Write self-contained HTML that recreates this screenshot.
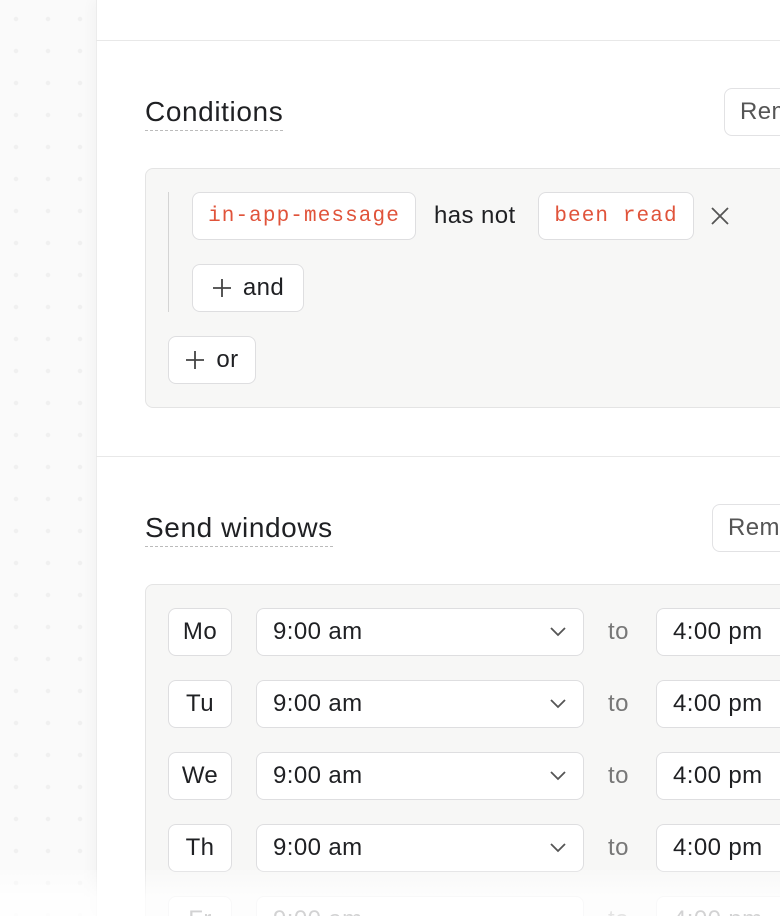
<!DOCTYPE html>
<html><head><meta charset="utf-8"><style>
*{box-sizing:border-box;margin:0;padding:0}
html,body{width:780px;height:916px;overflow:hidden}
body{background:#fff;font-family:"Liberation Sans",sans-serif;color:#1f2023;position:relative}
.side{position:absolute;left:0;top:0;width:96px;height:916px;background-color:#fafafa;background-image:radial-gradient(circle,#f0f0f0 2px,transparent 2.5px);background-size:32px 32px;background-position:0 3px}
.main{position:absolute;left:96px;top:0;width:684px;height:916px;background:#fff;border-left:1px solid #ececec;box-shadow:-4px 0 12px rgba(0,0,0,.03)}
.hl{position:absolute;left:96px;right:0;height:1px;background:#e8e8e8}
.h{position:absolute;left:145px;font-size:28px;letter-spacing:0.6px;line-height:32px;border-bottom:1.5px dashed #bbb;padding-bottom:2px}
.btn{position:absolute;background:#fff;border:1px solid #e2e2e4;border-radius:8px;font-size:24px;letter-spacing:0.4px;display:flex;align-items:center;padding-left:15px;color:#555}
.box{position:absolute;left:145px;width:660px;background:#f7f7f6;border:1px solid #e4e4e4;border-radius:8px}
.chip{position:absolute;height:48px;background:#fff;border:1px solid #dedee0;border-radius:8px;display:flex;align-items:center;justify-content:center;font-size:24px;letter-spacing:0.4px;color:#1f2023}
.mono{font-family:"Liberation Mono",monospace;font-size:21px;letter-spacing:1.1px;color:#e0533a}
.t{position:absolute;font-size:24px;letter-spacing:0.4px;line-height:48px}
.sel{justify-content:flex-start;padding-left:16px}
.fade{position:absolute;left:0;right:0;top:870px;height:46px;background:linear-gradient(rgba(255,255,255,0.2),rgba(255,255,255,.8) 60%)}
</style></head><body>
<div class="side"></div>
<div class="main"></div>
<div class="hl" style="top:40px"></div>
<div class="h" style="top:96px">Conditions</div>
<div class="btn" style="left:724px;top:88px;width:80px;height:48px">Rem</div>
<div class="box" style="top:168px;height:240px"></div>
<div style="position:absolute;left:168px;top:192px;width:1px;height:120px;background:#d4d4d4"></div>
<div class="chip" style="left:192px;top:192px;width:224px"><span class="mono">in-app-message</span></div>
<div class="t" style="left:434px;top:192px">has not</div>
<div class="chip" style="left:538px;top:192px;width:156px"><span class="mono">been read</span></div>
<svg style="position:absolute;left:710px;top:206px" width="20" height="20" viewBox="0 0 20 20"><path d="M2 2L18 18M18 2L2 18" stroke="#555" stroke-width="1.8"/></svg>
<div class="chip" style="left:192px;top:264px;width:112px"><svg width="20" height="20" viewBox="0 0 20 20" style="margin-right:11px"><path d="M10 1V19M1 10H19" stroke="#444" stroke-width="1.8"/></svg>and</div>
<div class="chip" style="left:168px;top:336px;width:88px"><svg width="20" height="20" viewBox="0 0 20 20" style="margin-right:11px"><path d="M10 1V19M1 10H19" stroke="#444" stroke-width="1.8"/></svg>or</div>
<div class="hl" style="top:456px"></div>
<div class="h" style="top:512px">Send windows</div>
<div class="btn" style="left:712px;top:504px;width:90px;height:48px">Rem</div>
<div class="box" style="top:584px;height:340px"></div>

<div class="chip" style="left:168px;top:608px;width:64px">Mo</div>
<div class="chip sel" style="left:256px;top:608px;width:328px">9:00 am<svg style="position:absolute;right:16px;top:17px" width="18" height="12" viewBox="0 0 18 12"><path d="M2 2L9 9L16 2" stroke="#555" stroke-width="1.8" fill="none"/></svg></div>
<div class="t" style="left:608px;top:608px;color:#777">to</div>
<div class="chip sel" style="left:656px;top:608px;width:200px">4:00 pm</div>

<div class="chip" style="left:168px;top:680px;width:64px">Tu</div>
<div class="chip sel" style="left:256px;top:680px;width:328px">9:00 am<svg style="position:absolute;right:16px;top:17px" width="18" height="12" viewBox="0 0 18 12"><path d="M2 2L9 9L16 2" stroke="#555" stroke-width="1.8" fill="none"/></svg></div>
<div class="t" style="left:608px;top:680px;color:#777">to</div>
<div class="chip sel" style="left:656px;top:680px;width:200px">4:00 pm</div>

<div class="chip" style="left:168px;top:752px;width:64px">We</div>
<div class="chip sel" style="left:256px;top:752px;width:328px">9:00 am<svg style="position:absolute;right:16px;top:17px" width="18" height="12" viewBox="0 0 18 12"><path d="M2 2L9 9L16 2" stroke="#555" stroke-width="1.8" fill="none"/></svg></div>
<div class="t" style="left:608px;top:752px;color:#777">to</div>
<div class="chip sel" style="left:656px;top:752px;width:200px">4:00 pm</div>

<div class="chip" style="left:168px;top:824px;width:64px">Th</div>
<div class="chip sel" style="left:256px;top:824px;width:328px">9:00 am<svg style="position:absolute;right:16px;top:17px" width="18" height="12" viewBox="0 0 18 12"><path d="M2 2L9 9L16 2" stroke="#555" stroke-width="1.8" fill="none"/></svg></div>
<div class="t" style="left:608px;top:824px;color:#777">to</div>
<div class="chip sel" style="left:656px;top:824px;width:200px">4:00 pm</div>

<div class="chip" style="left:168px;top:896px;width:64px">Fr</div>
<div class="chip sel" style="left:256px;top:896px;width:328px">9:00 am</div>
<div class="t" style="left:608px;top:896px;color:#777">to</div>
<div class="chip sel" style="left:656px;top:896px;width:200px">4:00 pm</div>
<div class="fade"></div>
</body></html>
